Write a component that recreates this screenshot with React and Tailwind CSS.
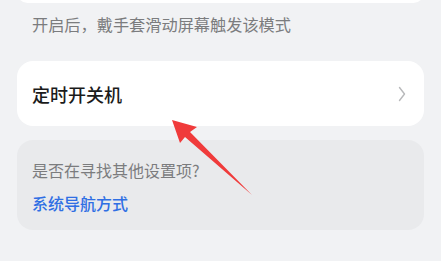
export default function App() {
  const font = { fontFamily: '"Noto Sans CJK SC", "Noto Sans", sans-serif' };

  return (
    <div
      className="relative w-[441px] h-[261px] overflow-hidden bg-[#f1f2f4]"
      style={font}
    >
      {/* tail of the card above */}
      <div className="mx-[17px] -mt-[18px] h-[21px] rounded-2xl bg-white" />

      <p className="mt-[10px] pl-[32px] text-[16.2px] leading-[22px] text-[#7b7c7e]">
        开启后，戴手套滑动屏幕触发该模式
      </p>

      {/* 定时开关机 */}
      <div className="mx-[17px] mt-[26px] h-[65px] rounded-2xl bg-white pl-[15px] pr-[18px] flex items-center justify-between">
        <span className="text-[18px] leading-[24px] font-medium text-[#1b1b1b]">
          定时开关机
        </span>
        <svg width="8" height="16" viewBox="0 0 8 16" fill="none">
          <path
            d="M1.5 1.5 L6.5 8 L1.5 14.5"
            stroke="#b8b9bb"
            strokeWidth="1.4"
            strokeLinecap="round"
            strokeLinejoin="round"
          />
        </svg>
      </div>

      {/* 其他设置项 */}
      <div className="mx-[17px] mt-[14px] h-[90px] rounded-2xl bg-[#e9eaec] pl-[15px] pt-[19px]">
        <p className="text-[16px] leading-[22px] text-[#7b7c7e]">
          是否在寻找其他设置项?
        </p>
        <p className="mt-[11px] text-[16px] leading-[22px] font-medium text-[#2f6fe4]">
          系统导航方式
        </p>
      </div>

      {/* red annotation arrow */}
      <svg
        className="absolute left-0 top-0 pointer-events-none"
        width="441"
        height="261"
        viewBox="0 0 441 261"
      >
        <polygon
          points="172,120 197,127 190,132 252,195 185,137 180,143"
          fill="#f03b3b"
        />
      </svg>
    </div>
  );
}
